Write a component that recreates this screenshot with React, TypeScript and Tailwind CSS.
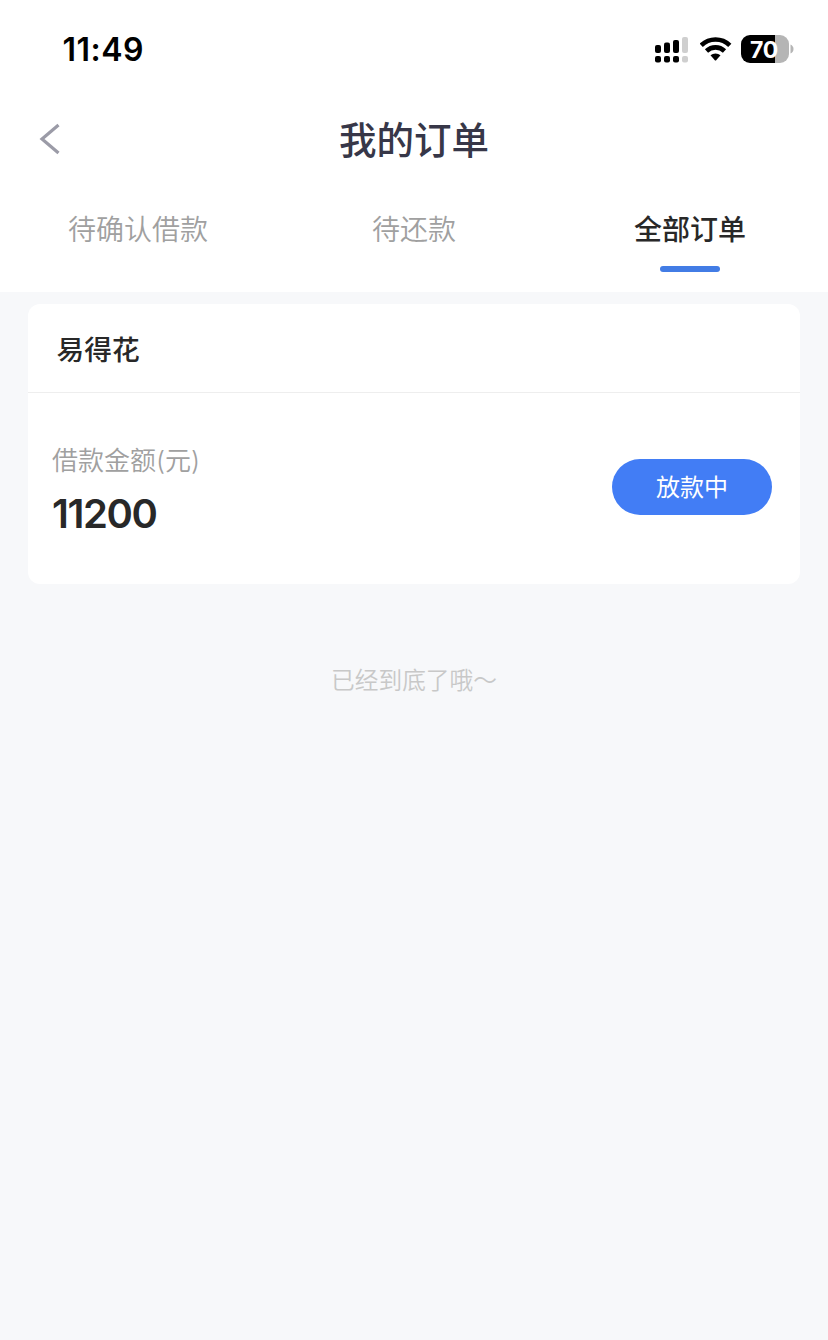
const cjk = "font-['Inter','Noto_Sans_CJK_SC',sans-serif]";

function StatusBar() {
  return (
    <div className="flex h-[100px] items-start justify-between pl-[62.500px] pr-[34px]">
      <span className="mt-[30px] text-[32px] leading-[40px] font-semibold tracking-[0.5px] text-black">11:49</span>
      <div className="mt-[35px] flex items-center">
        <svg width="34" height="28" viewBox="0 0 34 28" className="mr-[12px]">
          <g fill="#000">
            <rect x="1" y="10" width="6" height="8" rx="2" />
            <rect x="10" y="7.500" width="6" height="10.500" rx="2" />
            <rect x="19" y="5" width="6" height="13" rx="2" />
            <rect x="1" y="21" width="6" height="6.500" rx="2" />
            <rect x="10" y="21" width="6" height="6.500" rx="2" />
            <rect x="19" y="21" width="6" height="6.500" rx="2" />
          </g>
          <g fill="#cfcfcf">
            <rect x="28" y="2" width="6" height="16" rx="2" />
            <rect x="28" y="21" width="6" height="6.500" rx="2" />
          </g>
        </svg>
        <svg width="32" height="28" viewBox="0 0 32 28" className="mr-[9px]">
          <g fill="none" stroke="#000" strokeWidth="4.600">
            <path d="M1.200 10.300A20.500 20.500 0 0 1 29.800 10.300" />
            <path d="M6.500 16A13 13 0 0 1 24.500 16" />
          </g>
          <path d="M10.500 20.300A7.600 7.600 0 0 1 20.500 20.300L16.200 25.200Q15.500 25.800 14.800 25.200Z" fill="#000" />
        </svg>
        <div className="flex h-[28px] w-[48px] items-center justify-center rounded-[9px] bg-[linear-gradient(to_right,#000_34px,#b5b5b5_34px)]">
          <span className="pt-px pr-[2px] text-[23px] leading-[28px] font-bold tracking-[-0.3px] text-white">70</span>
        </div>
        <svg width="4" height="10" viewBox="0 0 4 10" className="ml-px">
          <path d="M0.500 0.500Q3.500 2 3.500 5T0.500 9.500Z" fill="#b5b5b5" />
        </svg>
      </div>
    </div>
  );
}

export default function App() {
  return (
    <div className={`min-h-[1340px] w-[828px] bg-[#f7f8fa] ${cjk}`}>
      <header className="h-[292px] bg-white">
        <StatusBar />
        <nav className="grid h-[78px] grid-cols-[1fr_auto_1fr] items-center">
          <button aria-label="返回" className="pl-[39px]">
            <svg width="22" height="32" viewBox="0 0 22 32" fill="none" stroke="#9b9ba7" strokeWidth="3.200">
              <path d="M19.500 2L3 16L19.500 30" />
            </svg>
          </button>
          <h1 className="pt-[4px] text-[37.500px] leading-[50px] font-medium text-[#373748]">我的订单</h1>
        </nav>
        <div className="grid grid-cols-3 text-[28px] leading-[40px]">
          <div className="flex justify-center pt-[32px] font-[350] text-[#a0a0a0]">待确认借款</div>
          <div className="flex justify-center pt-[32px] font-[350] text-[#a0a0a0]">待还款</div>
          <div className="flex flex-col items-center pt-[32px] font-medium text-[#282828]">
            全部订单
            <div className="mt-[16px] h-[6px] w-[60px] rounded-full bg-[#427ce5]" />
          </div>
        </div>
      </header>
      <main className="px-[28px] pt-[12px]">
        <section className="h-[280px] rounded-[12px] bg-white">
          <h2 className="flex h-[89px] items-center border-b-[1.500px] border-[#eeeeee] pt-[3px] pl-[28.500px] text-[27.700px] leading-[40px] font-medium text-[#282828]">
            易得花
          </h2>
          <div className="flex items-start justify-between pl-[24px] pr-[28px]">
            <div className="pt-[49px]">
              <div className="text-[26px] leading-[38px] font-[350] text-[#a0a0a0]">借款金额(元)</div>
              <div className="mt-[10px] text-[40px] leading-[48px] font-[560] tracking-[-1.400px] text-[#282828]">11200</div>
            </div>
            <button className="mt-[66px] h-[56px] w-[160px] rounded-full bg-[#427df5] pt-px text-[24px] leading-[55px] text-white">
              放款中
            </button>
          </div>
        </section>
        <p className="mt-[79px] text-center text-[23.700px] leading-[36px] font-[350] text-[#c8c8c8]">已经到底了哦～</p>
      </main>
    </div>
  );
}
